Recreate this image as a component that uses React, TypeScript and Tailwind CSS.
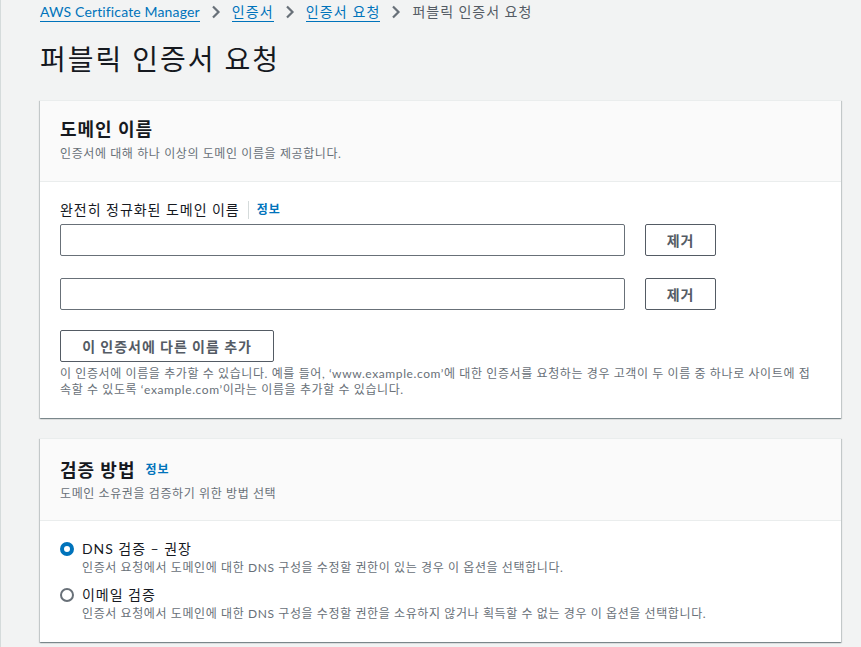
import React, { useState } from 'react';

const font = { fontFamily: 'Lato, "Noto Sans CJK KR", sans-serif' };

function Chevron() {
    return (
        <svg width="10" height="14" viewBox="0 0 10 14" className="mx-[11px]">
            <path d="M2 1.5 L7.5 7 L2 12.5" fill="none" stroke="#687078" strokeWidth="2.2" />
        </svg>
    );
}

function Card({ children }: { children: React.ReactNode }) {
    return (
        <div className="bg-white border-t border-[#eaeded] shadow-[0_1px_1px_0_rgba(0,28,36,0.3),1px_1px_1px_0_rgba(0,28,36,0.15),-1px_1px_1px_0_rgba(0,28,36,0.15)]">
            {children}
        </div>
    );
}

export default function App() {
    const [method, setMethod] = useState('dns');

    return (
        <div style={font} className="min-h-[647px] bg-[#f2f3f3] border-l border-[#d5dbdb] pl-[39px] pr-[20px] text-[#16191f] tracking-[0.06em]">
            {/* Breadcrumbs */}
            <nav className="flex items-center h-[24px] text-[14px]">
                <a className="text-[#0073bb] border-b border-[#0073bb] leading-[18px] tracking-[0.01em]">AWS Certificate Manager</a>
                <Chevron />
                <a className="text-[#0073bb] border-b border-[#0073bb] leading-[18px] tracking-[0.08em]">인증서</a>
                <Chevron />
                <a className="text-[#0073bb] border-b border-[#0073bb] leading-[18px] tracking-[0.08em]">인증서 요청</a>
                <Chevron />
                <span className="text-[#545b64] leading-[18px]">퍼블릭 인증서 요청</span>
            </nav>

            <h1 className="text-[28px] leading-[36px] font-normal mt-[17px] mb-[23px] tracking-[0.07em]">퍼블릭 인증서 요청</h1>

            <Card>
                <div className="bg-[#fafafa] border-b border-[#eaeded] px-[20px] pt-[14px] pb-[18px]">
                    <h2 className="text-[18px] leading-[28px] font-bold">도메인 이름</h2>
                    <p className="text-[12px] leading-[18px] text-[#687078] mt-[2px] tracking-[0.05em]">인증서에 대해 하나 이상의 도메인 이름을 제공합니다.</p>
                </div>
                <div className="px-[20px] pt-[17px] pb-[20px]">
                    <div className="flex items-center text-[14px] leading-[22px] mb-[3px]">
                        <span>완전히 정규화된 도메인 이름</span>
                        <span className="mx-[8px] h-[18px] border-l border-[#d5dbdb]" />
                        <a className="text-[#0073bb] text-[12px] font-bold">정보</a>
                    </div>
                    {[0, 1].map((i) => (
                        <div key={i} className={`flex items-center gap-[20px] ${i === 1 ? 'mt-[22px]' : ''}`}>
                            <input className="w-[565px] h-[32px] border border-[#687078] rounded-[2px] px-[10px] text-[14px] bg-white outline-none" />
                            <button className="w-[71px] h-[32px] border border-[#545b64] rounded-[2px] text-[14px] font-bold text-[#545b64] bg-white">제거</button>
                        </div>
                    ))}
                    <button className="mt-[20px] w-[214px] h-[32px] border border-[#545b64] rounded-[2px] text-[14px] font-bold text-[#545b64] bg-white">이 인증서에 다른 이름 추가</button>
                    <p className="mt-[4px] text-[12px] leading-[16px] text-[#687078] tracking-[0.05em]">
                        이 인증서에 이름을 추가할 수 있습니다. 예를 들어, ‘www.example.com’에 대한 인증서를 요청하는 경우 고객이 두 이름 중 하나로 사이트에 접속할 수 있도록 ‘example.com’이라는 이름을 추가할 수 있습니다.
                    </p>
                </div>
            </Card>

            <div className="h-[20px]" />

            <Card>
                <div className="bg-[#fafafa] border-b border-[#eaeded] px-[20px] pt-[17px] pb-[17px]">
                    <h2 className="text-[18px] leading-[28px] font-bold flex items-center">
                        검증 방법
                        <a className="ml-[10px] text-[#0073bb] text-[12px] font-bold">정보</a>
                    </h2>
                    <p className="text-[12px] leading-[18px] text-[#687078] mt-[1px] tracking-[0.05em]">도메인 소유권을 검증하기 위한 방법 선택</p>
                </div>
                <div className="px-[20px] pt-[17px] pb-[20px]">
                    {[
                        { id: 'dns', label: 'DNS 검증 – 권장', desc: '인증서 요청에서 도메인에 대한 DNS 구성을 수정할 권한이 있는 경우 이 옵션을 선택합니다.' },
                        { id: 'email', label: '이메일 검증', desc: '인증서 요청에서 도메인에 대한 DNS 구성을 수정할 권한을 소유하지 않거나 획득할 수 없는 경우 이 옵션을 선택합니다.' },
                    ].map((o, i) => (
                        <label key={o.id} className={`flex items-start cursor-pointer ${i === 1 ? 'mt-[8px]' : ''}`} onClick={() => setMethod(o.id)}>
                            <span className="mt-[4px] w-[14px] h-[14px] shrink-0 flex items-center justify-center">
                                {method === o.id ? (
                                    <span className="w-[14px] h-[14px] rounded-full border-[4px] border-[#0073bb] bg-white" />
                                ) : (
                                    <span className="w-[14px] h-[14px] rounded-full border-[2px] border-[#687078] bg-white" />
                                )}
                            </span>
                            <span className="ml-[8px]">
                                <span className="block text-[14px] leading-[22px]">{o.label}</span>
                                <span className="block text-[12px] leading-[16px] text-[#687078] tracking-[0.05em]">{o.desc}</span>
                            </span>
                        </label>
                    ))}
                </div>
            </Card>
        </div>
    );
}
